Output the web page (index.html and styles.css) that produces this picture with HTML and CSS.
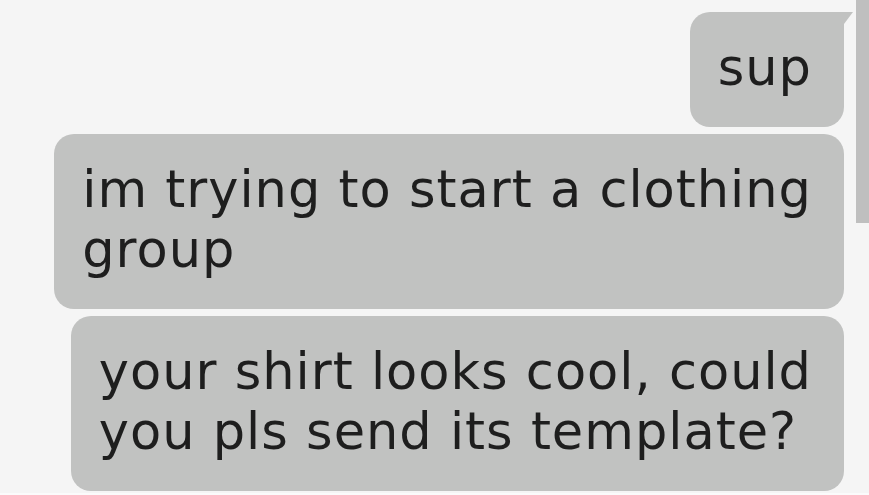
FILE: index.html
```html
<!DOCTYPE html>
<html>
<head>
<meta charset="utf-8">
<link rel="stylesheet" href="styles.css">
</head>
<body>
<div class="chat">
  <div class="thread">
    <div class="bubble bubble--tail">sup</div>
    <div class="bubble">im trying to start a clothing<br>group</div>
    <div class="bubble">your shirt looks cool, could<br>you pls send its template?</div>
  </div>
  <div class="scrollbar"></div>
</div>
</body>
</html>
```

FILE: styles.css
```css
html, body {
  margin: 0;
  padding: 0;
  background: #f5f5f5;
}
.chat {
  position: relative;
  width: 869px;
  height: 495px;
  overflow: hidden;
  box-sizing: border-box;
  border-bottom: 2px solid #fbfbfb;
}
.thread {
  display: flex;
  flex-direction: column;
  align-items: flex-end;
  gap: 7px;
  padding: 12px 25px 0 0;
}
.bubble {
  position: relative;
  background: #c1c2c1;
  color: #1e1e1e;
  font-family: "DejaVu Sans", sans-serif;
  font-size: 51px;
  letter-spacing: 1px;
  line-height: 60px;
  padding: 26px 32px 29px 28px;
  border-radius: 20px;
  width: max-content;
}
.bubble--tail {
  border-top-right-radius: 0;
}
.bubble--tail::after {
  content: "";
  position: absolute;
  top: 0;
  right: -9px;
  border-top: 12px solid #c1c2c1;
  border-right: 9px solid transparent;
}
.scrollbar {
  position: absolute;
  top: 0;
  right: 0;
  width: 13px;
  height: 223px;
  background: #bfbfbf;
}
```
